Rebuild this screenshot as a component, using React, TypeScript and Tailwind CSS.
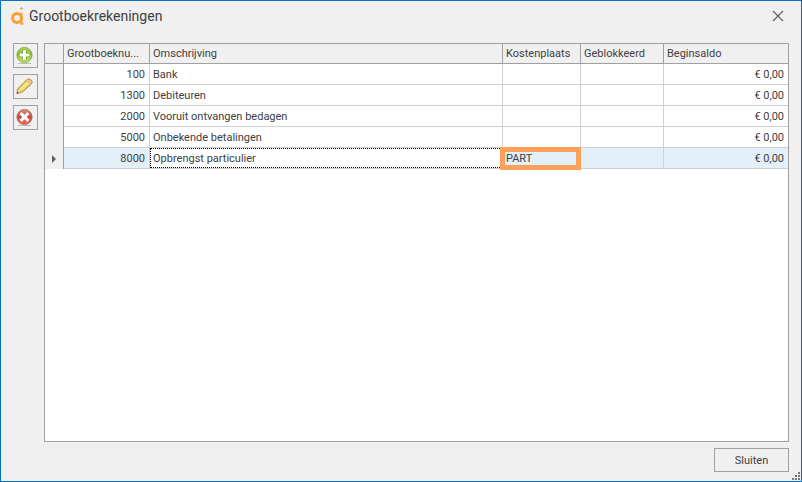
import type { ReactNode } from "react";

/* ── Data ── */
type Account = {
  number: string;
  description: string;
  costCenter?: string;
  blocked?: string;
  balance: string;
};

const ACCOUNTS: Account[] = [
  { number: "100", description: "Bank", balance: "€ 0,00" },
  { number: "1300", description: "Debiteuren", balance: "€ 0,00" },
  { number: "2000", description: "Vooruit ontvangen bedagen", balance: "€ 0,00" },
  { number: "5000", description: "Onbekende betalingen", balance: "€ 0,00" },
  { number: "8000", description: "Opbrengst particulier", costCenter: "PART", balance: "€ 0,00" },
];

const SELECTED = "8000";

/* ── Icons ── */
function LogoIcon() {
  return (
    <svg width="16" height="18" viewBox="0 0 16 18" fill="none" aria-hidden="true">
      <circle cx="6" cy="11" r="4.4" stroke="#fb9e2d" strokeWidth="3" />
      <path d="M10.500 6v10.700h2" stroke="#fb9e2d" strokeWidth="2" />
      <path d="M10.500 0v3M9 1.500h3" stroke="#fb9e2d" strokeWidth="1" />
    </svg>
  );
}

function AddIcon() {
  return (
    <svg width="17" height="17" viewBox="0 0 17 17" aria-hidden="true">
      <defs>
        <linearGradient id="add" x1="0" y1="0" x2="0" y2="1">
          <stop offset="0" stopColor="#b7d67a" />
          <stop offset="0.45" stopColor="#8dbb2e" />
          <stop offset="1" stopColor="#d3ee62" />
        </linearGradient>
      </defs>
      <path d="M2 16.5h13" stroke="#8a9080" strokeWidth="1" opacity="0.5" />
      <circle cx="8.5" cy="8" r="7.600" fill="url(#add)" stroke="#74a03a" strokeWidth="0.8" />
      <path
        d="M7 3h3v3.500h3.500v3H10V13H7V9.500H3.500v-3H7z"
        fill="#fff"
        stroke="#6c9e2b"
        strokeWidth="1.200"
        strokeLinejoin="round"
        paintOrder="stroke"
      />
    </svg>
  );
}

function EditIcon() {
  return (
    <svg width="17" height="17" viewBox="0 0 17 17" aria-hidden="true">
      <path
        d="M.8 15.6l1-5L10.6 1.9c1.5-1.2 3.3-1.1 4.5.1 1.3 1.2 1.3 2.8.1 4.2L6.2 14.2z"
        fill="#efbb62"
        stroke="#b8803a"
        strokeWidth="0.9"
        strokeLinejoin="round"
      />
      <path d="M4.5 12L12 4.5" stroke="#e0f07c" strokeWidth="3.400" />
      <path d="M10.8 2.7l3.5 3.4.8-.9c.8-1 .7-1.9-.2-2.7-1.1-1-2.3-.9-3.3-.4z" fill="#edbf95" />
      <path d="M2.2 11.2l1.3.5.7 1.4 1.3.8-4.2 1.2z" fill="#f3d6a5" />
      <path d="M.8 15.6l.5-2.2L3 15z" fill="#5c4938" />
    </svg>
  );
}

function DeleteIcon() {
  return (
    <svg width="17" height="17" viewBox="0 0 17 17" aria-hidden="true">
      <defs>
        <linearGradient id="delete" x1="0" y1="0" x2="0" y2="1">
          <stop offset="0" stopColor="#d49a70" />
          <stop offset="0.45" stopColor="#c8483a" />
          <stop offset="1" stopColor="#ee6a56" />
        </linearGradient>
      </defs>
      <path d="M2 16.5h13" stroke="#8f8585" strokeWidth="1" opacity="0.5" />
      <circle cx="8.5" cy="8" r="7.6" fill="url(#delete)" stroke="#a8605a" strokeWidth="0.8" />
      <path
        d="M5.700 3l2.800 2.800L11.300 3l2.200 2.200L10.700 8l2.800 2.800-2.200 2.200-2.800-2.800L5.700 13l-2.200-2.200L6.300 8 3.500 5.200z"
        fill="#fff"
      />
    </svg>
  );
}

function CloseIcon() {
  return (
    <svg width="12" height="12" viewBox="0 0 12 12" aria-hidden="true">
      <path d="M1 1l10 10M11 1L1 11" stroke="#5a6464" strokeWidth="1.2" />
    </svg>
  );
}

function ResizeGrip() {
  return (
    <svg width="9" height="9" viewBox="0 0 9 9" fill="#787878" aria-hidden="true">
      <path d="M6 0h2v2H6zM3 3h2v2H3zM6 3h2v2H6zM0 6h2v2H0zM3 6h2v2H3zM6 6h2v2H6z" />
    </svg>
  );
}

/* ── Parts ── */
function ToolButton({ label, children }: { label: string; children: ReactNode }) {
  return (
    <button
      type="button"
      aria-label={label}
      className="flex size-[25px] items-center border border-[#a0a0a0] bg-[#f0f0f0] pl-[2px]"
    >
      {children}
    </button>
  );
}

function HeaderCell({ children, last }: { children: ReactNode; last?: boolean }) {
  return (
    <th
      scope="col"
      className={`h-5 border-b border-[#a0a0a0] bg-[#f0f0f0] px-[3px] text-left font-normal whitespace-nowrap ${last ? "" : "border-r"}`}
    >
      {children}
    </th>
  );
}

function AccountRow({ account }: { account: Account }) {
  const selected = account.number === SELECTED;
  const cell = `h-[21px] border-b border-[#d0d0d0] pt-[2px] pr-1 pl-[3px] ${selected ? "bg-[#e3f0f9]" : ""}`;
  return (
    <tr aria-selected={selected}>
      <td className="border-r border-[#a0a0a0] bg-[#f0f0f0]">
        {selected && (
          <svg width="4" height="8" viewBox="0 0 4 8" className="mx-auto" aria-hidden="true">
            <path d="M0 0l4 4-4 4z" fill="#5a6464" />
          </svg>
        )}
      </td>
      <td className={`${cell} border-r text-right`}>{account.number}</td>
      {selected ? (
        <td className="h-[21px] border-r border-b border-[#d0d0d0]">
          <div className="flex h-5 items-center border border-dotted border-black px-[2px] pt-[2px]">
            {account.description}
          </div>
        </td>
      ) : (
        <td className={`${cell} border-r`}>{account.description}</td>
      )}
      <td className={`${cell} relative border-r`}>
        {account.costCenter}
        {account.costCenter && (
          <span className="absolute -top-px -right-px -bottom-[2px] -left-[3px] border-5 border-[#ffa05a]" />
        )}
      </td>
      <td className={`${cell} border-r`}>{account.blocked}</td>
      <td className={`${cell} text-right`}>{account.balance}</td>
    </tr>
  );
}

export default function App() {
  return (
    <div className="flex min-h-screen flex-col border border-[#0070c0] bg-[#f0f0f0] font-[Roboto,sans-serif] text-[11px] leading-4 text-[#404040]">
      <header className="flex h-[30px] items-center justify-between pr-[17px] pl-[10px]">
        <h1 className="flex items-center gap-[2px] text-sm">
          <LogoIcon />
          Grootboekrekeningen
        </h1>
        <button type="button" aria-label="Venster sluiten">
          <CloseIcon />
        </button>
      </header>

      <main className="flex flex-1 gap-[6px] px-3 pt-3">
        <div className="flex flex-col gap-[6px]">
          <ToolButton label="Toevoegen">
            <AddIcon />
          </ToolButton>
          <ToolButton label="Bewerken">
            <EditIcon />
          </ToolButton>
          <ToolButton label="Verwijderen">
            <DeleteIcon />
          </ToolButton>
        </div>

        <div className="min-w-0 flex-1 border border-[#a0a0a0] bg-white">
          <table className="w-full table-fixed border-separate border-spacing-0">
            <colgroup>
              <col className="w-[19px]" />
              <col className="w-[86px]" />
              <col />
              <col className="w-[78px]" />
              <col className="w-[83px]" />
              <col className="w-[124px]" />
            </colgroup>
            <thead>
              <tr>
                <HeaderCell>{null}</HeaderCell>
                <HeaderCell>Grootboeknu...</HeaderCell>
                <HeaderCell>Omschrijving</HeaderCell>
                <HeaderCell>Kostenplaats</HeaderCell>
                <HeaderCell>Geblokkeerd</HeaderCell>
                <HeaderCell last>Beginsaldo</HeaderCell>
              </tr>
            </thead>
            <tbody>
              {ACCOUNTS.map((account) => (
                <AccountRow key={account.number} account={account} />
              ))}
            </tbody>
          </table>
        </div>
      </main>

      <footer className="flex h-[39px] justify-end pt-[6px]">
        <button type="button" className="h-6 w-[75px] border border-[#a0a0a0] pt-[2px]">
          Sluiten
        </button>
        <div className="flex w-3 items-end justify-end">
          <ResizeGrip />
        </div>
      </footer>
    </div>
  );
}
